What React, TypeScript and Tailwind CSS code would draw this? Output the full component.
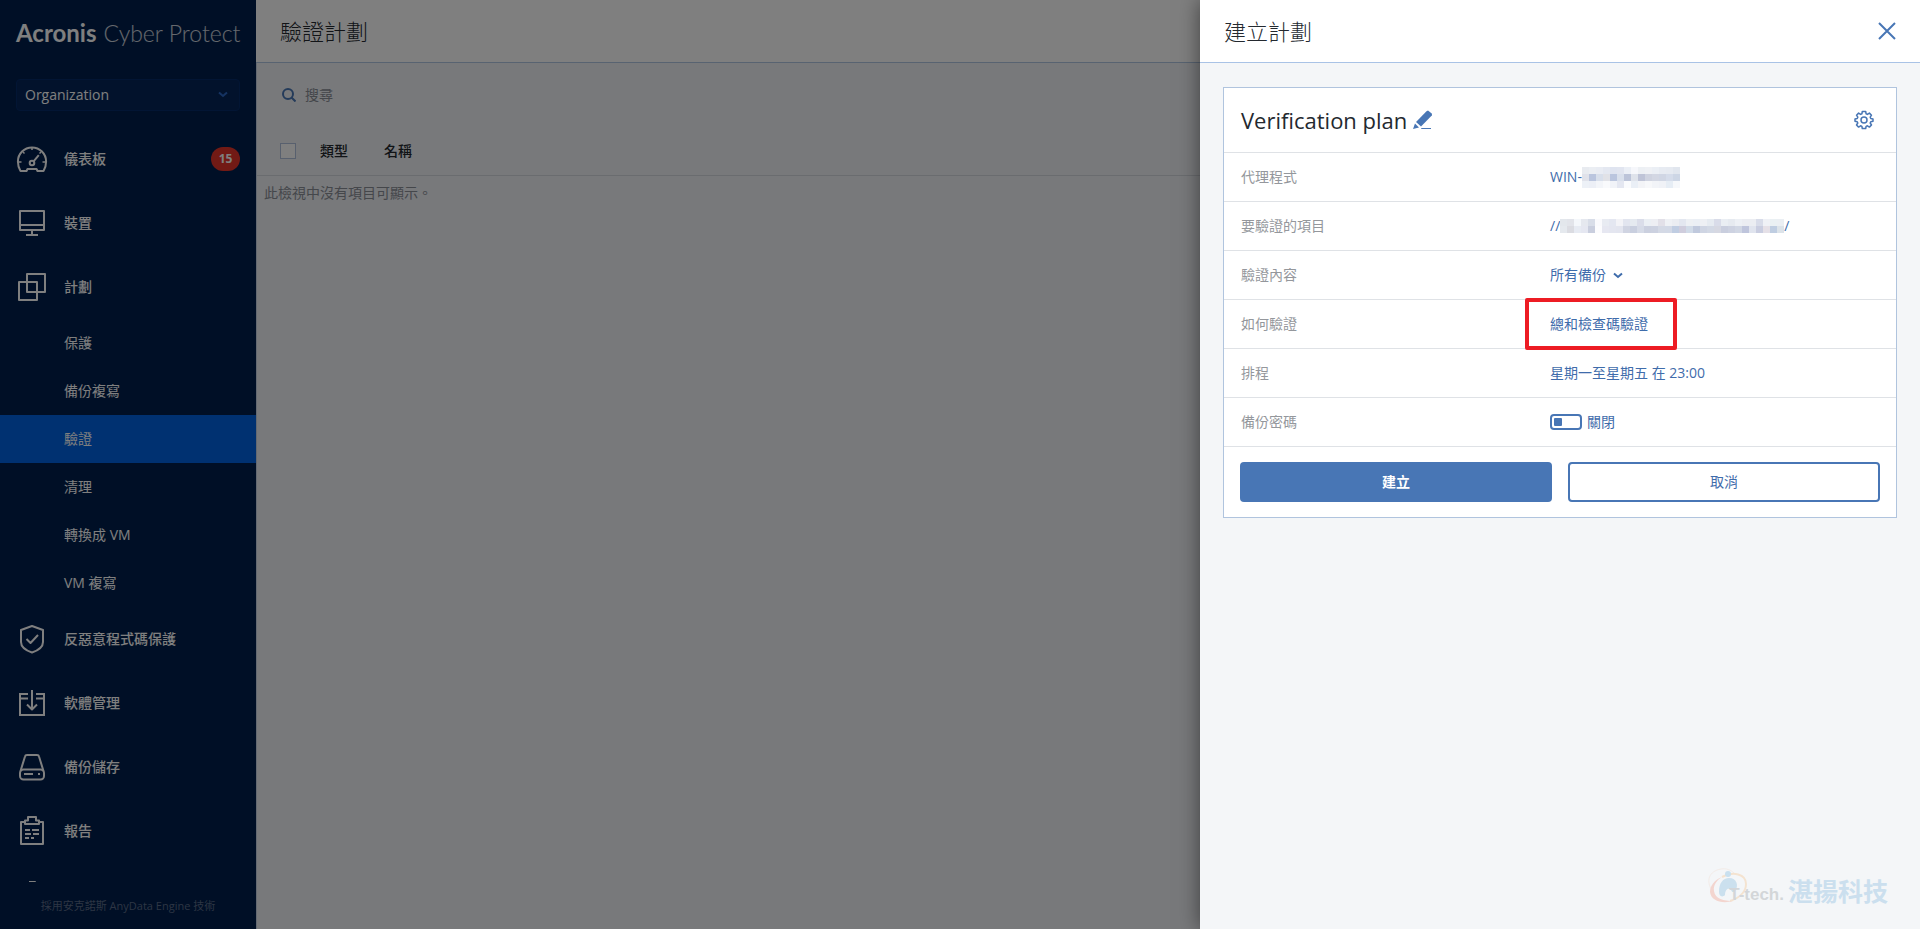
import React, { useState } from "react";

interface NavItem {
  id: string;
  label: string;
  icon: React.ReactNode;
  badge?: number;
  children?: { id: string; label: string }[];
}

const NavIcon: React.FC<{ children?: React.ReactNode }> = ({ children }) => (
  <svg
    viewBox="0 0 32 32"
    className="w-8 h-8 shrink-0"
    fill="none"
    stroke="currentColor"
    strokeWidth="2"
    strokeLinejoin="round"
    aria-hidden="true"
  >
    {children}
  </svg>
);

const NAV_ITEMS: NavItem[] = [
  {
    id: "dashboard",
    label: "儀表板",
    badge: 15,
    icon: (
      <NavIcon>
        <path d="M4.5 28C2.6 25 1.9 22 1.9 18.5a14.1 14.1 0 0 1 28.2 0c0 3.500-.7 6.500-2.600 9.500h-6l-1-2h-9l-1 2z" />
        <path d="M2 19h3.500M26.500 19H30M16 4.500V7M7 9l1.500 1.500M25 9l-1.500 1.500" strokeWidth="1.500" />
        <circle cx="16" cy="20" r="2.300" />
        <path d="M17.800 18.200l5-6" />
      </NavIcon>
    ),
  },
  {
    id: "devices",
    label: "裝置",
    icon: (
      <NavIcon>
        <rect x="4" y="4" width="24" height="19" />
        <path d="M4 18h24M16 23v5M10 28h12" />
      </NavIcon>
    ),
  },
  {
    id: "plans",
    label: "計劃",
    icon: (
      <NavIcon>
        <rect x="11" y="3" width="18" height="18" />
        <rect x="3" y="11" width="18" height="18" />
      </NavIcon>
    ),
    children: [
      { id: "protection", label: "保護" },
      { id: "replication", label: "備份複寫" },
      { id: "validation", label: "驗證" },
      { id: "cleanup", label: "清理" },
      { id: "conversion", label: "轉換成 VM" },
      { id: "vm-replication", label: "VM 複寫" },
    ],
  },
  {
    id: "antimalware",
    label: "反惡意程式碼保護",
    icon: (
      <NavIcon>
        <path d="M16 3l11 4v12c0 5-5 8.500-11 10.500C10 27.500 5 24 5 19V7z" />
        <path d="M10.500 16l4 4 7.500-8" />
      </NavIcon>
    ),
  },
  {
    id: "software",
    label: "軟體管理",
    icon: (
      <NavIcon>
        <path d="M12 7H4v21h24V7h-8M4 11.500h8M20 11.500h8" strokeLinejoin="miter" />
        <path d="M16 3v19M11 17.500l5 5 5-5" />
      </NavIcon>
    ),
  },
  {
    id: "storage",
    label: "備份儲存",
    icon: (
      <NavIcon>
        <path d="M4.500 20L9 5.500Q9.300 4 11 4h10q1.700 0 2 1.500L27.500 20" />
        <rect x="4" y="18.500" width="24" height="10" rx="3.500" />
        <path d="M8 23h9M22 23h2" />
      </NavIcon>
    ),
  },
  {
    id: "reports",
    label: "報告",
    icon: (
      <NavIcon>
        <path d="M9 7H5v22h22V7h-4" />
        <path d="M9 9V5.500h3V2h8v3.500h3V9z" />
        <path d="M9 15h5M16 15h7M9 19h6M17 19h6M9 23h4M15 23h3" />
      </NavIcon>
    ),
  },
];

const AGENT_MOSAIC = [
  ["#e8ebf0", "#ebeef3", "#e9ecf3", "#e4e8f1", "#dfe4f0", "#e1e5f0", "#ebeff6", "#f6f7fb", "#edf0f4", "#eff1f5", "#ebeff5", "#e7ebf2", "#e6eaf1", "#e1e6ee"],
  ["#e0e2ea", "#bac5de", "#d8dfeb", "#e1e2e7", "#bac5de", "#d9e0ec", "#bcc4d9", "#dfe3eb", "#bfc4d7", "#cfd3e0", "#d3d7e3", "#d0d6e4", "#d5dcea", "#cdd6e5"],
  ["#edf1f7", "#eceff6", "#f3f5f9", "#f9fafc", "#f1f3f8", "#e4e7f1", "#fafbfd", "#eaeff6", "#f3f4f7", "#f7f8fa", "#f2f4f8", "#f0f2f7", "#e6edf5", "#f6f8fb"],
];

const TARGET_MOSAIC = [
  ["#e3e7ec", "#e2e4ea", "#f4f7fb", "#e5e8ef", "#d8dde8", "#fafafd", "#e8ebf2", "#e4e7f1", "#f3f3f7", "#e2e5ef", "#e5eaf0", "#dadde9", "#ebeff4", "#edeef3", "#e2e0e8", "#eff1f5", "#ebedf2", "#e3e7f0", "#edf0f4", "#ebeff5", "#eef0f4", "#e6ebf1", "#d9dce9", "#eaeef3", "#e6eaf0", "#edf0f5", "#ebedf2", "#ebedf2", "#d8dce9", "#eff1f6", "#eaf0f3", "#ebeff3"],
  ["#e5e9ee", "#dbdce2", "#e7ebf3", "#e5e7f1", "#c9cede", "#fcfcfe", "#e6e7f1", "#e4e6f0", "#e3e5ef", "#d0d4e2", "#c9cfdf", "#d6dbe7", "#cbd0df", "#ccd1e0", "#d4d9e5", "#d3d9e6", "#c0cde2", "#cfcddd", "#d1dbe8", "#c0c9dd", "#cfd5e3", "#d3d9e5", "#d6d8e2", "#c9cede", "#cdd2e1", "#d1d7e4", "#bfc5dc", "#e0e4ee", "#c9cde0", "#e5e0e7", "#bfcde1", "#dce3e9"],
];

const CELL = 7;

const Mosaic: React.FC<{ rows: string[][] }> = ({ rows }) => (
  <svg
    width={rows[0].length * CELL}
    height={rows.length * CELL}
    shapeRendering="crispEdges"
    className="shrink-0"
    aria-hidden="true"
  >
    {rows.map((row, y) =>
      row.map((color, x) => (
        <rect key={`${x}-${y}`} x={x * CELL} y={y * CELL} width={CELL} height={CELL} fill={color} />
      ))
    )}
  </svg>
);

const ChevronDown: React.FC<{ className?: string }> = ({ className }) => (
  <svg viewBox="0 0 10 7" fill="none" stroke="currentColor" strokeWidth="2" className={className} aria-hidden="true">
    <path d="M1 1.500l4 3.500 4-3.500" />
  </svg>
);

const Sidebar: React.FC = () => (
  <aside className="w-64 shrink-0 h-full flex flex-col bg-[#001e4c] text-white">
    <div className="h-[79px] shrink-0 px-4 pt-[17px] flex gap-[7px] whitespace-nowrap font-[Lato] leading-8">
      <span className="text-2xl leading-8 font-bold">Acronis</span>
      <span className="text-[23px] font-light text-white/80">Cyber Protect</span>
    </div>

    <div className="relative mx-4 mb-4 shrink-0">
      <select
        aria-label="Organization"
        className="w-full h-8 pl-2 pr-8 appearance-none rounded-sm border border-[#042a68] bg-[#042558] text-sm text-white"
      >
        <option>Organization</option>
      </select>
      <ChevronDown className="absolute right-3 top-3 w-[10px] h-[7px] text-[#2b66c4] pointer-events-none" />
    </div>

    <nav className="flex-1 min-h-0 overflow-hidden text-sm">
      {NAV_ITEMS.map((item) => (
        <div key={item.id}>
          <a href={`#${item.id}`} className="h-16 px-4 flex items-center gap-4 font-medium">
            {item.icon}
            <span className="flex-1">{item.label}</span>
            {item.badge && (
              <span className="w-[29px] h-6 rounded-full bg-[#e4342a] text-xs font-bold flex items-center justify-center">
                {item.badge}
              </span>
            )}
          </a>
          {item.children?.map((child) => (
            <a
              key={child.id}
              href={`#${child.id}`}
              className={`h-12 pl-16 flex items-center ${child.id === "validation" ? "bg-[#0062e2]" : ""}`}
            >
              {child.label}
            </a>
          ))}
        </div>
      ))}
      <a href="#settings" aria-label="設定" className="h-16 px-4 flex items-center">
        <NavIcon>
          <path d="M13 3h6v4l4 2 3-2 3 5-3 2v4l3 2-3 5-3-2-4 2v4h-6" />
        </NavIcon>
      </a>
    </nav>

    <footer className="h-[47px] shrink-0 pt-4 text-center text-[11px] leading-4 text-[#5a6b88]">
      採用安克諾斯 AnyData Engine 技術
    </footer>
  </aside>
);

const PlansPage: React.FC = () => (
  <main className="flex-1 min-w-0 h-full flex flex-col bg-[#f0f2f6] text-[#24292f]">
    <header className="h-[63px] shrink-0 pl-6 flex items-center bg-white border-b border-[#b1c6e2]">
      <h1 className="text-[22px] leading-8 font-light">驗證計劃</h1>
    </header>
    <div className="flex-1 border-l border-[#c6d2e4]">
      <label className="h-16 pl-[25px] flex items-center gap-[9px]">
        <svg viewBox="0 0 14 14" className="w-[14px] h-[14px] text-[#4876b5]" fill="none" stroke="currentColor" strokeWidth="2" aria-hidden="true">
          <circle cx="6" cy="6" r="5" />
          <path d="M9.500 9.500l4 4" />
        </svg>
        <input
          type="search"
          aria-label="搜尋"
          placeholder="搜尋"
          className="w-60 bg-transparent text-sm placeholder:text-[#8a8e96]"
        />
      </label>
      <table className="w-full text-sm text-left">
        <thead>
          <tr className="h-12 border-b border-[#d5d8df]">
            <th className="w-[63px] pl-[23px]">
              <input
                type="checkbox"
                aria-label="全選"
                className="block w-4 h-4 appearance-none border border-[#b1c0dc] bg-white"
              />
            </th>
            <th className="w-16 font-medium">類型</th>
            <th className="font-medium">名稱</th>
          </tr>
        </thead>
        <tbody>
          <tr>
            <td colSpan={3} className="pl-[7px] pt-[7px] text-[#8a8e96]">
              此檢視中沒有項目可顯示。
            </td>
          </tr>
        </tbody>
      </table>
    </div>
  </main>
);

const PlanRow: React.FC<{ label: string; children: React.ReactNode }> = ({ label, children }) => (
  <div className="h-[49px] px-[17px] flex items-center border-b border-[#dfe2e6] text-sm">
    <dt className="w-[309px] shrink-0 text-[#94979c]">{label}</dt>
    <dd className="flex-1 min-w-0 flex items-center text-[#3f6cab]">{children}</dd>
  </div>
);

const Watermark: React.FC = () => (
  <div className="absolute right-8 bottom-[22px] flex items-center pointer-events-none whitespace-nowrap">
    <svg viewBox="0 0 42 40" className="w-[42px] h-10" fill="none" aria-hidden="true">
      <path d="M6 25C-2 14 2 4 14 2c5-1 10 1 13 4" stroke="#f3ece8" strokeWidth="1" />
      <path d="M15 10C26 4 39 7 39 17c0 8-7 14-16 17" stroke="#f4e3d0" strokeWidth="2" />
      <path d="M15 10C7 13 3 19 3 25c1 9 12 12 23 9-9 0-18-2-19-10C6 18 10 13 15 10z" fill="#f3d5cf" />
      <circle cx="21" cy="7" r="3" fill="#c9e0ef" />
      <path d="M12 25c0-9 4-14 10-14 8 0 10 8 6 13-2 2-3 1-4-1-3-3-6 0-6 5-3 3-6 1-6-3z" fill="#cbe0ee" />
    </svg>
    <span className="-ml-5 pt-4 font-['Liberation_Sans'] text-[17px] leading-5 font-bold text-[#d3d6d9]">T-tech.</span>
    <span className="ml-1 pt-2 text-[25px] leading-8 font-bold text-[#cbdfee]">湛揚科技</span>
  </div>
);

const CreatePlanPanel: React.FC = () => {
  const [passwordOn, setPasswordOn] = useState(false);

  return (
    <section
      role="dialog"
      aria-labelledby="panel-title"
      className="absolute inset-y-0 right-0 w-[720px] flex flex-col bg-[#f4f6f8] text-[#24292f] shadow-[0_0_20px_rgba(0,0,0,0.5)]"
    >
      <header className="h-[63px] shrink-0 px-6 flex items-center justify-between bg-white border-b border-[#a9c3e6]">
        <h2 id="panel-title" className="text-[22px] leading-8 font-light">建立計劃</h2>
        <button type="button" aria-label="關閉面板" className="text-[#4876b5]">
          <svg viewBox="0 0 18 18" className="w-[18px] h-[18px]" fill="none" stroke="currentColor" strokeWidth="2" aria-hidden="true">
            <path d="M1 1l16 16M17 1L1 17" />
          </svg>
        </button>
      </header>

      <div className="mx-[23px] mt-6 bg-white border border-[#b0c4de]">
        <div className="h-[65px] px-[17px] flex items-center border-b border-[#dfe2e6]">
          <h3 className="text-[22px]">Verification plan</h3>
          <button type="button" aria-label="重新命名" className="ml-1.5 text-[#4876b5]">
            <svg viewBox="0 0 20 20" className="w-5 h-5" fill="currentColor" aria-hidden="true">
              <path d="M13.500 1.200L15 .5 19 3.800 18.800 5.500 8 16.500 3 12z" />
              <path d="M2 13.500L6 17.500 0 19z" />
              <path d="M8.500 18h9.500v1H8z" />
            </svg>
          </button>
          <button type="button" aria-label="設定" className="ml-auto mr-[5px] text-[#4876b5]">
            <svg viewBox="0 0 20 20" className="w-5 h-5" fill="none" stroke="currentColor" strokeWidth="1.500" strokeLinejoin="round" aria-hidden="true">
              <path d="M8.300 1.500h3.400l.4 2.300 1.300.6 2-1.300 2.100 2.100-1.300 2 .6 1.300 2.200.4v2.400l-2.200.4-.6 1.300 1.300 2-2.100 2.100-2-1.300-1.300.6-.4 2.100H8.300l-.4-2.100-1.300-.6-2 1.300L2.500 15l1.300-2-.6-1.300-2.200-.4V8.900l2.200-.4.600-1.300-1.300-2 2.100-2.100 2 1.300 1.300-.6z" />
              <circle cx="10" cy="10.100" r="3" />
            </svg>
          </button>
        </div>

        <dl>
          <PlanRow label="代理程式">
            <span>WIN-</span>
            <Mosaic rows={AGENT_MOSAIC} />
          </PlanRow>
          <PlanRow label="要驗證的項目">
            <span>//</span>
            <Mosaic rows={TARGET_MOSAIC} />
            <span>/</span>
          </PlanRow>
          <PlanRow label="驗證內容">
            <select aria-label="驗證內容" className="appearance-none bg-transparent">
              <option>所有備份</option>
            </select>
            <ChevronDown className="ml-[7px] w-[10px] h-[7px] pointer-events-none" />
          </PlanRow>
          <PlanRow label="如何驗證">
            <button type="button" className="relative">
              總和檢查碼驗證
              {/* callout frame around the selected method */}
              <span className="absolute -left-[25px] -right-[29px] -inset-y-4 border-4 border-[#ed1c24] rounded-xs" />
            </button>
          </PlanRow>
          <PlanRow label="排程">
            <button type="button">星期一至星期五 在 23:00</button>
          </PlanRow>
          <PlanRow label="備份密碼">
            <label className="flex items-center gap-[5px]">
              <input
                type="checkbox"
                role="switch"
                checked={passwordOn}
                onChange={(e) => setPasswordOn(e.target.checked)}
                className="peer sr-only"
              />
              <span className="w-8 h-4 p-0.5 flex items-center border-2 border-[#4876b5] rounded-sm peer-checked:justify-end">
                <span className="w-2 h-2 bg-[#4876b5] rounded-[1px]" />
              </span>
              <span>{passwordOn ? "開啟" : "關閉"}</span>
            </label>
          </PlanRow>
        </dl>

        <div className="px-4 py-[15px] grid grid-cols-2 gap-4 text-sm">
          <button type="button" className="h-10 rounded bg-[#4876b5] text-white font-bold">建立</button>
          <button type="button" className="h-10 rounded border-2 border-[#4876b5] text-[#3f6cab]">取消</button>
        </div>
      </div>

      <Watermark />
    </section>
  );
};

export default function App() {
  return (
    <div className="relative h-screen flex overflow-hidden font-['Open_Sans','Noto_Sans_CJK_TC',sans-serif]">
      <Sidebar />
      <PlansPage />
      <div className="absolute inset-0 bg-black/50" />
      <CreatePlanPanel />
    </div>
  );
}
